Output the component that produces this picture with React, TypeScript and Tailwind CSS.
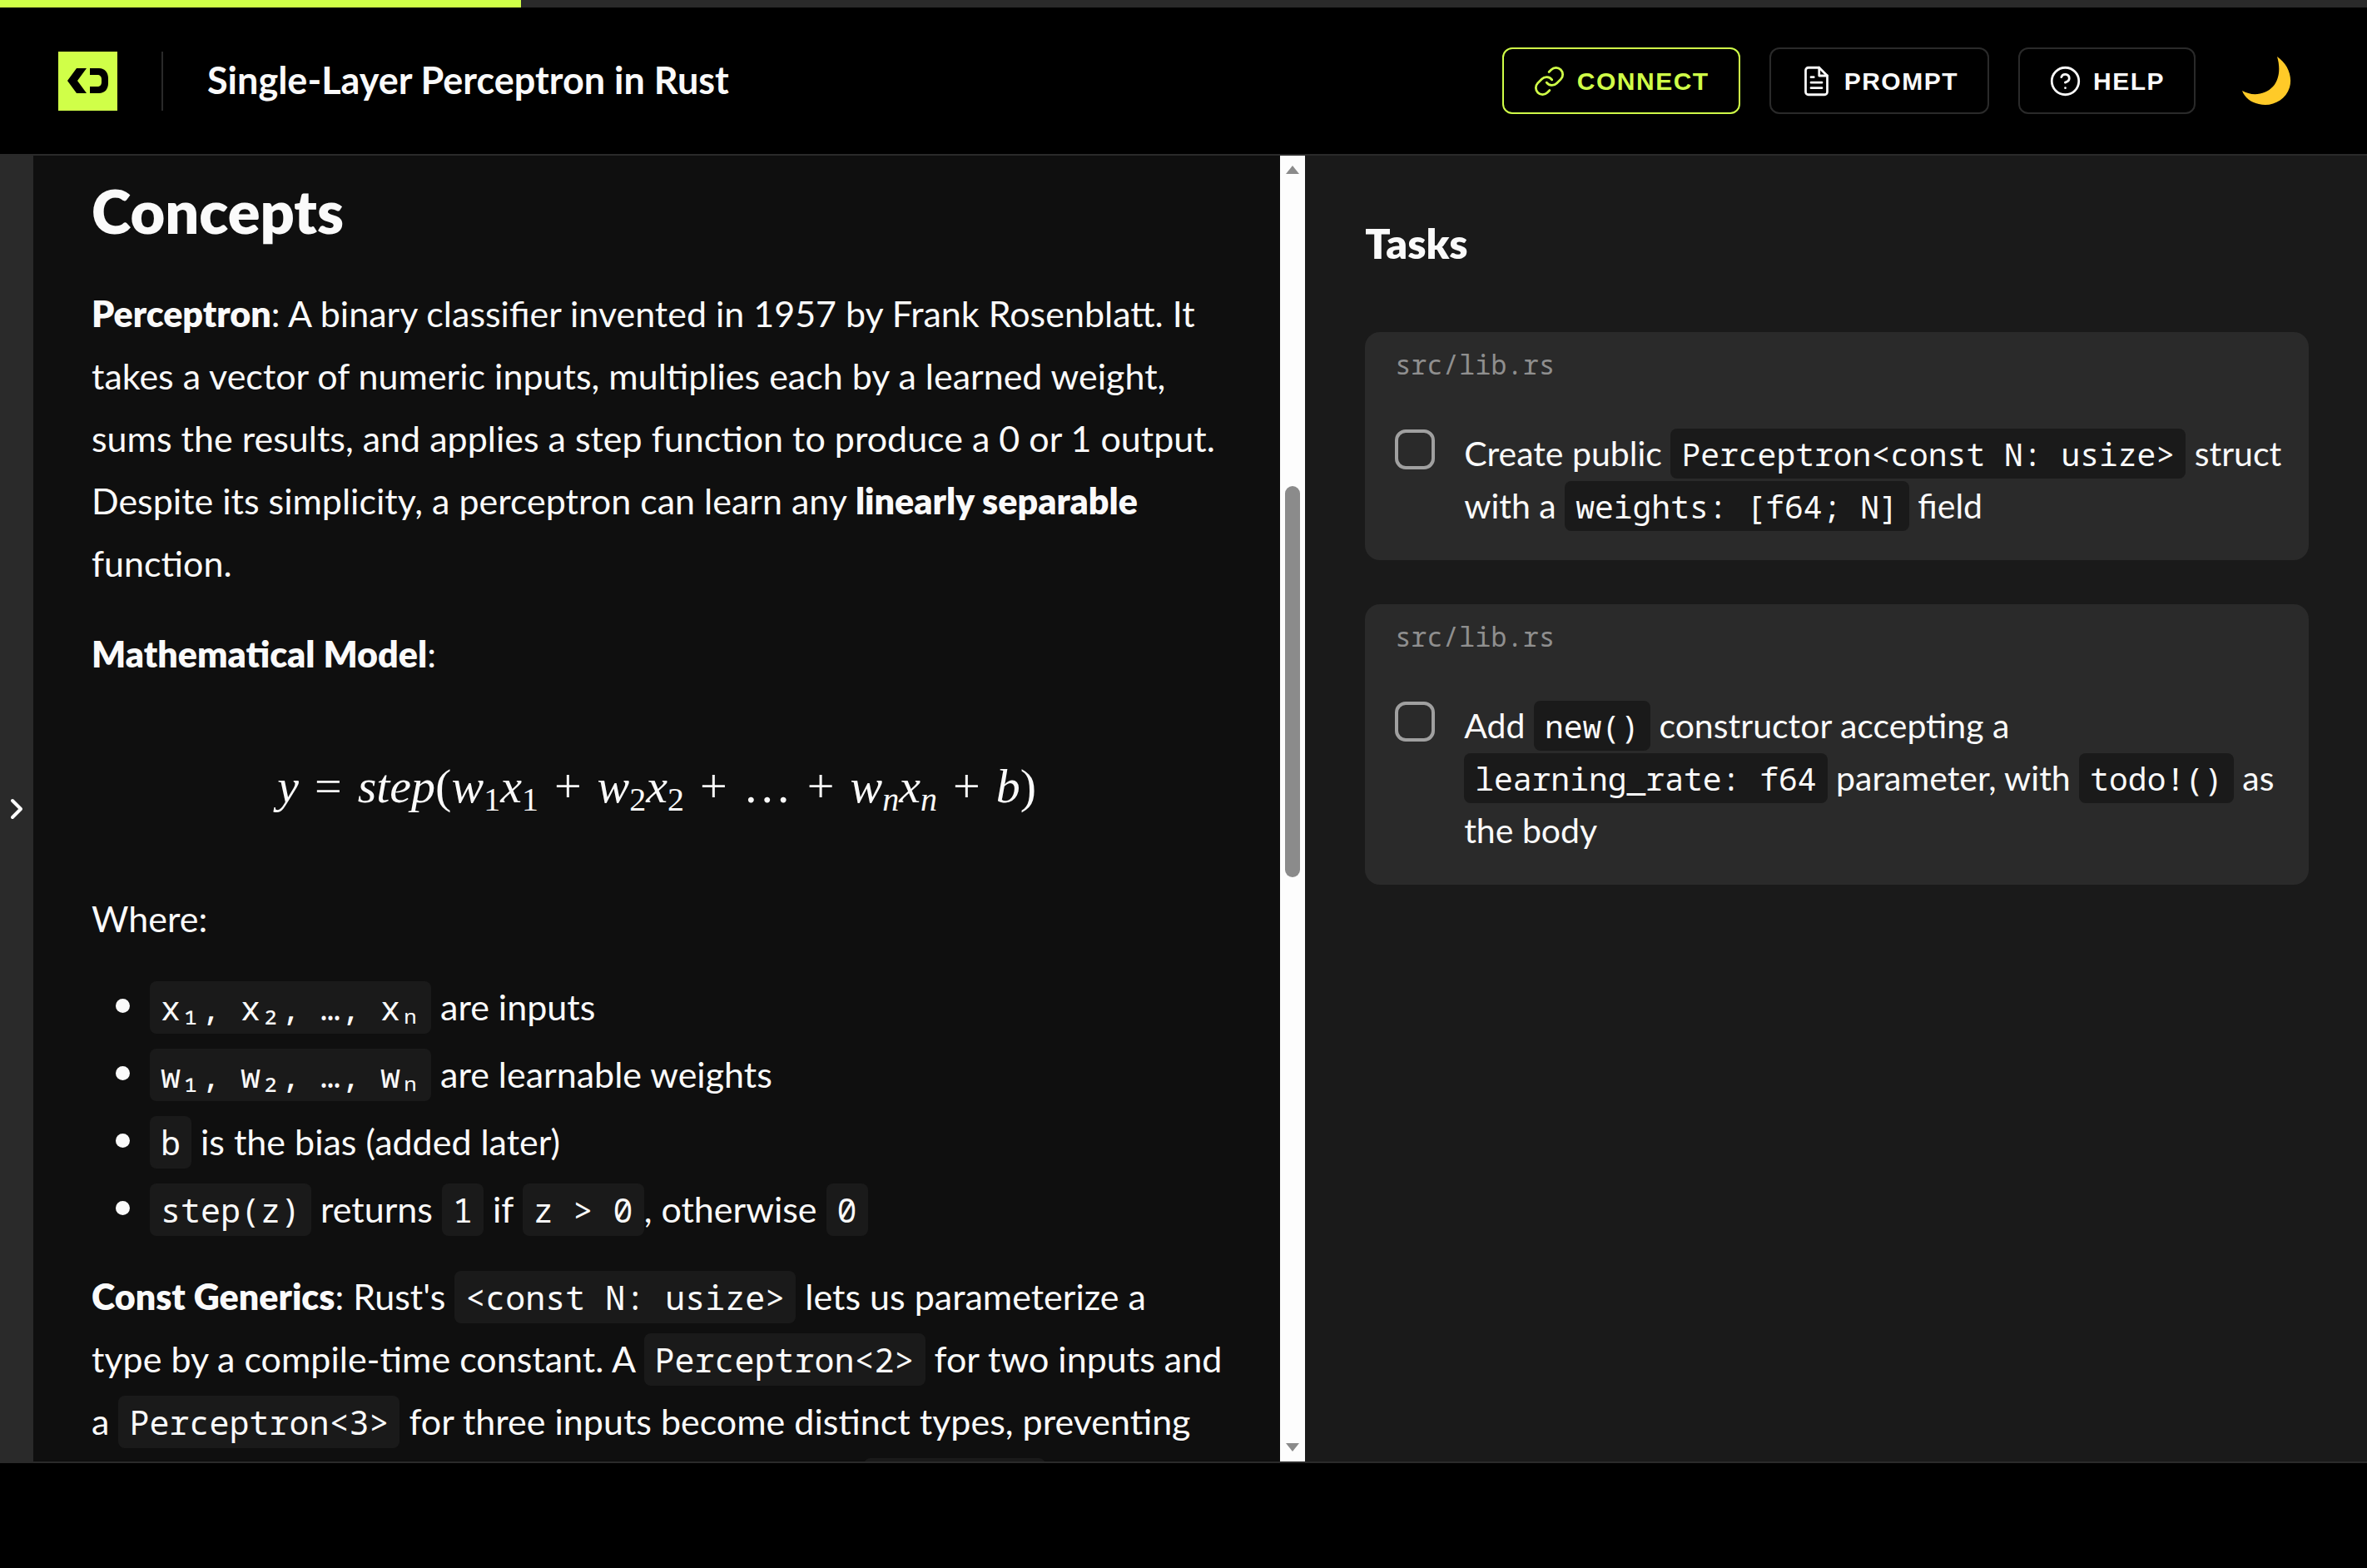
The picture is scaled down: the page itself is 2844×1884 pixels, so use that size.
import React from 'react';

function Code({ children }: { children: React.ReactNode }) {
  return (
    <code className="rounded-lg bg-[#1a1a1a] px-[13px] py-1 font-['Noto_Sans_Mono','DejaVu_Sans_Mono',monospace] text-[40px] leading-none whitespace-nowrap">
      {children}
    </code>
  );
}

function TaskCode({ children }: { children: React.ReactNode }) {
  return (
    <code className="rounded-lg bg-[#1a1a1a] px-[13px] py-1 font-['Noto_Sans_Mono','DejaVu_Sans_Mono',monospace] text-[38px] leading-none whitespace-nowrap">
      {children}
    </code>
  );
}

function Icon({ children }: { children: React.ReactNode }) {
  return (
    <svg className="size-[39px]" viewBox="0 0 24 24" fill="none" stroke="currentColor" strokeWidth={1.7} strokeLinecap="round" strokeLinejoin="round" aria-hidden="true">
      {children}
    </svg>
  );
}

function Header() {
  return (
    <header className="flex h-[178px] shrink-0 items-center justify-between border-b-2 border-[#2a2a2a] bg-black px-[70px]">
      <div className="flex items-center">
        <a href="#" aria-label="Home">
          <svg className="size-[71px]" viewBox="0 0 71 71" aria-hidden="true">
            <rect width="71" height="71" fill="#d0ff48" />
            <path d="M22 20h12L23 35l11 15H22L11 35z" fill="#000" />
            <path d="M38 20h11c7 0 11 5 11 12v6c0 7-4 12-11 12H38v-8h9c3 0 5-2 5-5v-4c0-3-2-5-5-5h-9z" fill="#000" />
          </svg>
        </a>
        <div className="ml-[53px] h-[71px] w-[2px] bg-[#2a2a2a]" />
        <h1 className="ml-[53px] text-[45px] font-bold">Single-Layer Perceptron in Rust</h1>
      </div>

      <div className="flex items-center gap-[35px] font-['Liberation_Sans',sans-serif] text-[30px] font-bold tracking-wider">
        <button className="flex h-20 items-center gap-[14px] rounded-xl border-2 border-[#d0ff48] px-[35px] text-[#d0ff48]">
          <Icon>
            <path d="M10 13a5 5 0 0 0 7.54.54l3-3a5 5 0 0 0-7.07-7.07l-1.72 1.71" />
            <path d="M14 11a5 5 0 0 0-7.54-.54l-3 3a5 5 0 0 0 7.07 7.07l1.71-1.71" />
          </Icon>
          CONNECT
        </button>
        <button className="flex h-20 items-center gap-[14px] rounded-xl border-2 border-[#2a2a2a] px-[35px]">
          <Icon>
            <path d="M14 2H6a2 2 0 0 0-2 2v16a2 2 0 0 0 2 2h12a2 2 0 0 0 2-2V8z" />
            <path d="M14 2v6h6M16 13H8M16 17H8M10 9H8" />
          </Icon>
          PROMPT
        </button>
        <button className="flex h-20 items-center gap-[14px] rounded-xl border-2 border-[#2a2a2a] px-[35px]">
          <Icon>
            <circle cx="12" cy="12" r="10" />
            <path d="M9.09 9a3 3 0 0 1 5.83 1c0 2-3 3-3 3M12 17h.01" />
          </Icon>
          HELP
        </button>
        <button aria-label="Toggle theme" className="mr-[21px] ml-5">
          <svg className="size-[60px]" viewBox="0 0 60 60" aria-hidden="true">
            <path d="M43 1C55 9 62 24 58 38C53 54 36 62 21 58C11 56 4 50 1 42C13 49 29 47 38 37C46 28 47 14 43 1z" fill="#ffca28" />
          </svg>
        </button>
      </div>
    </header>
  );
}

function Formula() {
  return (
    <div className="mt-[84px] mb-[84px] text-center font-['Liberation_Serif',serif] text-[58px] leading-[75px] whitespace-nowrap">
      <i>y</i>
      <span className="mx-[19px]">=</span>
      <i>step</i>(<i>w</i>
      <sub className="text-[40px]">1</sub>
      <i>x</i>
      <sub className="text-[40px]">1</sub>
      <span className="mx-[19px]">+</span>
      <i>w</i>
      <sub className="text-[40px]">2</sub>
      <i>x</i>
      <sub className="text-[40px]">2</sub>
      <span className="mx-[19px]">+</span>
      …
      <span className="mx-[19px]">+</span>
      <i>w</i>
      <sub className="text-[40px] italic">n</sub>
      <i>x</i>
      <sub className="text-[40px] italic">n</sub>
      <span className="mx-[19px]">+</span>
      <i>b</i>)
    </div>
  );
}

function Lesson() {
  return (
    <article className="min-w-0 flex-1 overflow-hidden bg-[#0f0f0f] px-[70px] pt-4 text-[43px] leading-[75px]">
      <h2 className="text-[72px] leading-[100px] font-extrabold">Concepts</h2>
      <p className="mt-9 whitespace-nowrap">
        <strong className="font-extrabold">Perceptron</strong>: A binary classifier invented in 1957 by Frank Rosenblatt. It
        <br />
        takes a vector of numeric inputs, multiplies each by a learned weight,
        <br />
        sums the results, and applies a step function to produce a 0 or 1 output.
        <br />
        Despite its simplicity, a perceptron can learn any <strong className="font-extrabold">linearly separable</strong>
        <br />
        function.
      </p>
      <p className="mt-[34px]">
        <strong className="font-extrabold">Mathematical Model</strong>:
      </p>
      <Formula />
      <p>Where:</p>
      <ul className="mt-7 list-disc space-y-[3px] pl-[70px] marker:text-[52px]">
        <li>
          <Code>x₁, x₂, …, xₙ</Code> are inputs
        </li>
        <li>
          <Code>w₁, w₂, …, wₙ</Code> are learnable weights
        </li>
        <li>
          <Code>b</Code> is the bias (added later)
        </li>
        <li>
          <Code>step(z)</Code> returns <Code>1</Code> if <Code>z &gt; 0</Code>, otherwise <Code>0</Code>
        </li>
      </ul>
      <p className="mt-[30px] whitespace-nowrap">
        <strong className="font-extrabold">Const Generics</strong>: Rust's <Code>&lt;const N: usize&gt;</Code> lets us parameterize a
        <br />
        type by a compile-time constant. A <Code>Perceptron&lt;2&gt;</Code> for two inputs and
        <br />
        a <Code>Perceptron&lt;3&gt;</Code> for three inputs become distinct types, preventing
        <br />
        dimension mismatches that a plain runtime-sized <Code>Vec&lt;f64&gt;</Code>
      </p>
    </article>
  );
}

function Scrollbar() {
  return (
    <div className="flex w-[30px] shrink-0 flex-col items-center bg-[#fdfdfd] py-3" aria-hidden="true">
      <svg className="h-[10px] w-4" viewBox="0 0 16 10">
        <path d="M8 0l8 10H0z" fill="#8b8b8b" />
      </svg>
      <div className="grow-[375]" />
      <div className="w-[18px] grow-[470] rounded-full bg-[#8b8b8b]" />
      <div className="grow-[680]" />
      <svg className="h-[10px] w-4" viewBox="0 0 16 10">
        <path d="M0 0h16L8 10z" fill="#8b8b8b" />
      </svg>
    </div>
  );
}

function Task({ id, file, children }: { id: string; file: string; children: React.ReactNode }) {
  return (
    <section className="rounded-[18px] bg-[#2a2a2a] px-9 pt-[18px] pb-[34px]">
      <div className="font-['Noto_Sans_Mono','DejaVu_Sans_Mono',monospace] text-[32px] leading-[42px] text-[#8f8f8f]">{file}</div>
      <div className="mt-[54px] flex items-start gap-[35px]">
        <input id={id} type="checkbox" className="mt-[3px] size-12 shrink-0 appearance-none rounded-[13px] border-4 border-[#a0a0a0]" />
        <label htmlFor={id} className="text-[41px] leading-[63px] whitespace-nowrap">
          {children}
        </label>
      </div>
    </section>
  );
}

function Tasks() {
  return (
    <aside className="min-w-0 flex-1 bg-[#1a1a1a] pt-[70px] pr-[70px] pl-[72px]">
      <h2 className="text-[50px] leading-[70px] font-extrabold">Tasks</h2>
      <div className="mt-[72px] flex flex-col gap-[53px]">
        <Task id="task-struct" file="src/lib.rs">
          Create public <TaskCode>Perceptron&lt;const N: usize&gt;</TaskCode> struct
          <br />
          with a <TaskCode>weights: [f64; N]</TaskCode> field
        </Task>
        <Task id="task-new" file="src/lib.rs">
          Add <TaskCode>new()</TaskCode> constructor accepting a
          <br />
          <TaskCode>learning_rate: f64</TaskCode> parameter, with <TaskCode>todo!()</TaskCode> as
          <br />
          the body
        </Task>
      </div>
    </aside>
  );
}

export default function App() {
  return (
    <div className="flex h-screen flex-col bg-black font-['Lato',sans-serif] text-[#fafafa]">
      <div className="h-[9px] shrink-0 bg-[#2a2a2a]">
        <div className="h-full w-[22%] bg-[#d0ff48]" />
      </div>
      <Header />
      <main className="flex min-h-0 flex-1">
        <button aria-label="Open sidebar" className="flex w-10 shrink-0 items-center justify-center bg-[#2a2a2a]">
          <svg className="h-[26px] w-4" viewBox="0 0 16 26" fill="none" stroke="#fff" strokeWidth={4} strokeLinecap="round" strokeLinejoin="round">
            <path d="M3 3l10 10L3 23" />
          </svg>
        </button>
        <div className="flex min-w-0 flex-1">
          <div className="flex w-[54.5%] shrink-0">
            <Lesson />
            <Scrollbar />
          </div>
          <Tasks />
        </div>
      </main>
      <footer className="h-32 shrink-0 border-t-2 border-[#2a2a2a] bg-black" />
    </div>
  );
}
